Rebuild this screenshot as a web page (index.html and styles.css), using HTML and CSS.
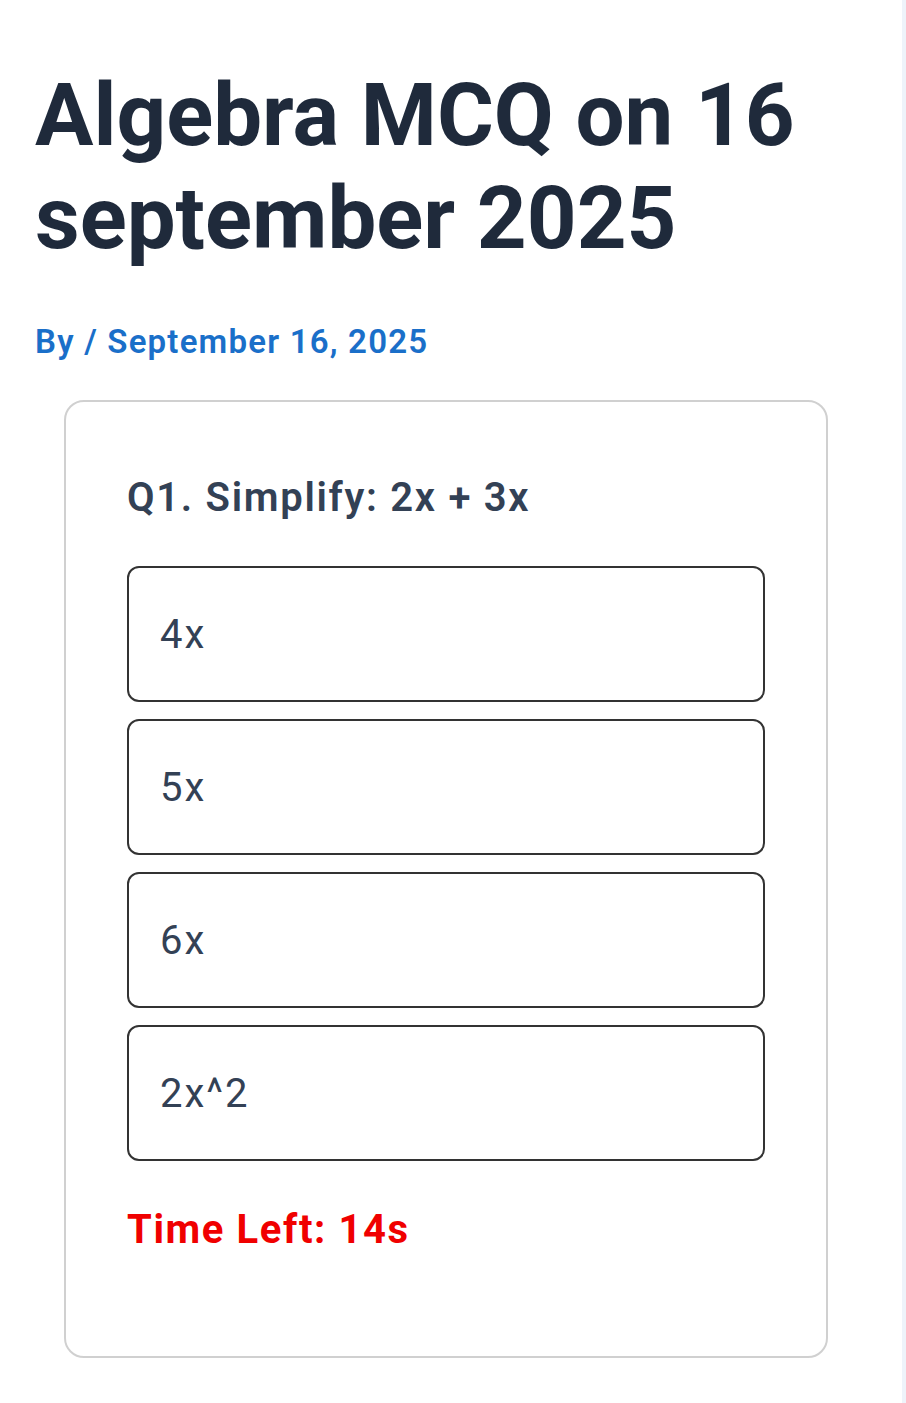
FILE: index.html
```html
<!DOCTYPE html>
<html lang="en">
<head>
<meta charset="utf-8">
<title>Algebra MCQ on 16 september 2025</title>
<link rel="stylesheet" href="styles.css">
</head>
<body>
<div class="page">
  <main class="content">
    <h1 class="title">Algebra MCQ on 16 september 2025</h1>
    <p class="meta">By / September 16, 2025</p>
    <section class="quiz">
      <h2 class="question">Q1. Simplify: 2x + 3x</h2>
      <div class="options">
        <div class="option">4x</div>
        <div class="option">5x</div>
        <div class="option">6x</div>
        <div class="option">2x^2</div>
      </div>
      <p class="timer">Time Left: 14s</p>
    </section>
  </main>
  <div class="edge"></div>
</div>
</body>
</html>
```
FILE: styles.css
```css
html, body {
  margin: 0;
  padding: 0;
  background: #ffffff;
}
body {
  font-family: Roboto, "Liberation Sans", sans-serif;
}
.page {
  display: flex;
  min-height: 1403px;
}
.content {
  flex: 1;
  padding: 64px 0 0 35px;
}
.edge {
  width: 4px;
  background: #eef3fa;
}
.title {
  margin: 0;
  font-size: 87px;
  line-height: 103px;
  font-weight: 700;
  color: #1f2a3b;
  width: 820px;
}
.meta {
  margin: 52px 0 0;
  font-size: 33px;
  line-height: 40px;
  font-weight: 600;
  letter-spacing: 1.2px;
  color: #1a6fc9;
}
.quiz {
  margin: 38px 0 0 29px;
  width: 764px;
  box-sizing: border-box;
  border: 2px solid #d0d0d0;
  border-radius: 20px;
  padding: 72px 61px 102px 61px;
}
.question {
  margin: 0;
  font-size: 40px;
  line-height: 48px;
  font-weight: 600;
  letter-spacing: 1.7px;
  color: #334155;
}
.options {
  display: flex;
  flex-direction: column;
  gap: 17px;
  margin-top: 44px;
}
.option {
  height: 136px;
  box-sizing: border-box;
  border: 2px solid #333333;
  border-radius: 12px;
  padding: 0 31px;
  display: flex;
  align-items: center;
  font-size: 40px;
  letter-spacing: 2px;
  color: #334155;
}
.timer {
  margin: 45px 0 0;
  font-size: 40px;
  line-height: 48px;
  font-weight: 700;
  letter-spacing: 1.6px;
  color: #f00000;
}
```
